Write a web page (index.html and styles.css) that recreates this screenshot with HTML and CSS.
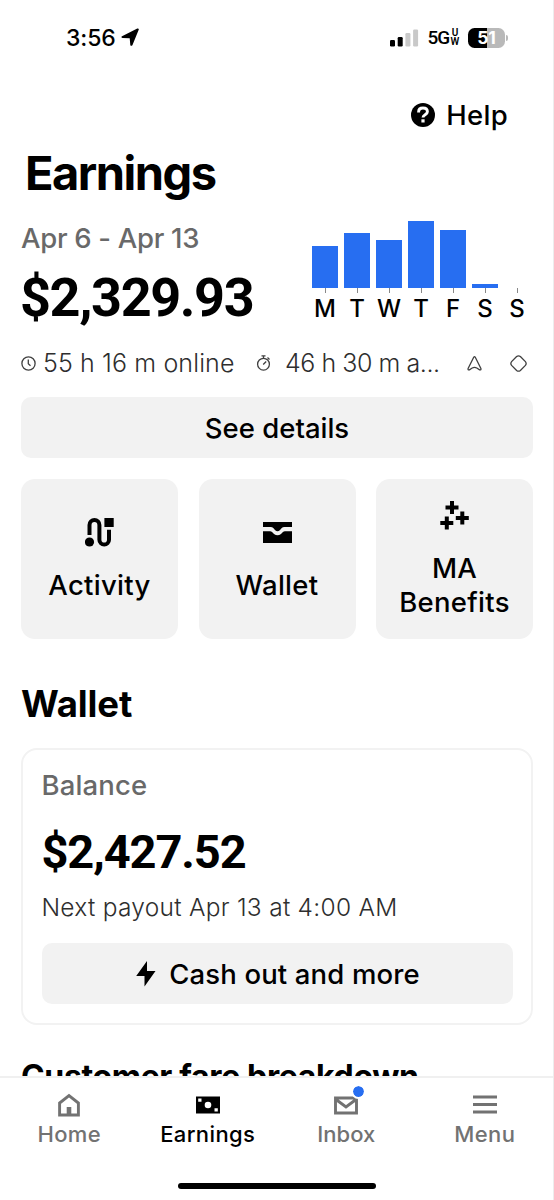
FILE: index.html
```html
<!DOCTYPE html>
<html lang="en">
<head>
<meta charset="utf-8">
<title>Earnings</title>
<link rel="stylesheet" href="styles.css">
</head>
<body>
<div class="screen">
  <header class="status">
    <div class="status-time"><span>3:56</span>
      <svg width="18" height="19" viewBox="0 0 18 19"><path d="M1 8.2 16.3.5c1-.4 1.800.3 1.400 1.300L11.500 17c-.5 1.200-2 1.100-2.200-.1L8.700 10.200 1.500 9.900C.2 9.800-.1 8.700 1 8.200z"/></svg>
    </div>
    <div class="status-right">
      <svg width="29" height="18" viewBox="0 0 29 18"><rect x="0" y="11" width="5" height="6.500" rx="1.200"/><rect x="7.700" y="8" width="5" height="9.500" rx="1.200"/><rect x="15.400" y="4" width="5" height="13.500" rx="1.200" fill="#c9c9c9"/><rect x="23.100" y=".5" width="5" height="17" rx="1.200" fill="#c9c9c9"/></svg>
      <span class="net">5G</span><span class="net-sub"><span>U</span><span>W</span></span>
      <span class="battery">51</span><i class="battery-tip"></i>
    </div>
  </header>

  <div class="help">
    <svg width="24" height="24" viewBox="0 0 24 24"><circle cx="12" cy="12" r="12"/><path d="M7.600 9.400V9c0-2.500 1.800-4 4.400-4s4.400 1.400 4.400 3.800c0 3-4.400 2.900-4.400 5.700" fill="none" stroke="#fff" stroke-width="2.900"/><rect x="10.400" y="16.300" width="3.200" height="3.200" fill="#fff"/></svg>
    <span>Help</span>
  </div>

  <main class="content">
    <h1 class="title">Earnings</h1>

    <section class="summary">
      <div class="week">
        <div class="range">Apr 6 - Apr 13</div>
        <div class="total">$2,329.93</div>
      </div>
      <div class="chart">
        <div class="day"><i class="bar" style="height:42px"></i><i class="tick"></i><span>M</span></div>
        <div class="day"><i class="bar" style="height:55px"></i><i class="tick"></i><span>T</span></div>
        <div class="day"><i class="bar" style="height:48px"></i><i class="tick"></i><span>W</span></div>
        <div class="day"><i class="bar" style="height:67px"></i><i class="tick"></i><span>T</span></div>
        <div class="day"><i class="bar" style="height:58px"></i><i class="tick"></i><span>F</span></div>
        <div class="day"><i class="bar" style="height:4px"></i><i class="tick"></i><span>S</span></div>
        <div class="day"><i class="bar" style="height:0px"></i><i class="tick"></i><span>S</span></div>
      </div>
    </section>

    <section class="stats">
      <svg width="15" height="15" viewBox="0 0 15 15"><circle cx="7.500" cy="7.500" r="6.600"/><path d="M7.300 3.500v4.200l2.200 2"/></svg>
      <span class="online">55 h 16 m online</span>
      <svg width="15" height="16" viewBox="0 0 15 16"><circle cx="7.500" cy="9.200" r="5.900"/><path d="M5.500.8h4M7.500.8v2.500M7.200 9.500l3-3M11.500 2.500l2 2"/></svg>
      <span class="active">46 h 30 m a...</span>
      <svg width="15" height="15" viewBox="0 0 15 15"><path d="M6.700 1.300 1.100 12.500c-.4 1 .3 1.700 1.300 1.300L5.200 12q2.300-1.200 4.600 0l2.800 1.800c1 .4 1.700-.3 1.300-1.300L8.300 1.300q-.8-1.200-1.600 0z"/></svg>
      <svg width="17" height="17" viewBox="0 0 17 17"><path d="M6.600 1.600q1.900-1.500 3.800 0l5 5q1.500 1.900 0 3.800l-5 5q-1.900 1.500-3.800 0l-5-5q-1.500-1.900 0-3.800z"/></svg>
    </section>

    <button class="button details">See details</button>

    <section class="tiles">
      <div class="tile">
        <svg width="29" height="29" viewBox="0 0 29 29"><circle cx="4.500" cy="24" r="4.600"/><rect x="19.400" y="0" width="9.300" height="9"/><path d="M4.500 17V7a4.950 4.950 0 0 1 9.900 0v14.800a4.800 4.800 0 0 0 9.600 0V11.700" fill="none" stroke="#000" stroke-width="4"/></svg>
        <span class="tile-label">Activity</span>
      </div>
      <div class="tile">
        <svg width="29" height="29" viewBox="0 0 29 29"><path d="M0 4h29v5h-7.500q-1.800 0-3 1.300l-1.700 1.900q-2.300 2-4.600 0l-1.700-1.900Q9.300 9 7.500 9H0z"/><path d="M0 13.300h7q1.300 0 2.300 1l1.700 1.700q3.500 2.700 7 0l1.700-1.700q1-1 2.300-1h7V25H0z"/></svg>
        <span class="tile-label">Wallet</span>
      </div>
      <div class="tile">
        <svg width="29" height="29" viewBox="0 0 29 29"><path d="M12 0v13M5.500 6.500h13M22.300 10.500v13M15.800 17h13M6.800 15.500v13M.3 22h13" fill="none" stroke="#000" stroke-width="4"/></svg>
        <span class="tile-label">MA<br>Benefits</span>
      </div>
    </section>

    <h2 class="heading">Wallet</h2>

    <section class="card">
      <div class="balance-label">Balance</div>
      <div class="balance">$2,427.52</div>
      <div class="payout">Next payout Apr 13 at 4:00 AM</div>
      <button class="button cash">
        <svg width="20" height="26" viewBox="0 0 20 26"><path d="M11 0v10h8.500L8.500 25.500V15H.2z"/></svg>
        <span>Cash out and more</span>
      </button>
    </section>

    <h2 class="heading fare">Customer fare breakdown</h2>
  </main>

  <nav class="tabs">
    <div class="tab">
      <svg width="24" height="24" viewBox="0 0 24 24"><path d="M2.600 22V10L12 2.500 21.400 10v12z" fill="none" stroke="#727272" stroke-width="2.900"/><path d="M9.700 14h4.600v8H9.700z" fill="#727272"/></svg>
      <span class="home-label">Home</span>
    </div>
    <div class="tab selected">
      <svg width="24" height="24" viewBox="0 0 24 24"><path d="M0 3.500h24v17H0z"/><path d="M2.200 5.500h3.300v3.300H2.200zM18.500 15.300h3.300v3.300h-3.300z" fill="#fff"/><circle cx="12" cy="12" r="3.300" fill="#fff"/></svg>
      <span class="earn-label">Earnings</span>
    </div>
    <div class="tab">
      <div class="inbox">
        <svg width="24" height="24" viewBox="0 0 24 24"><path d="M1.500 5h21v15h-21zM2 6.500l10 7.500 10-7.500" fill="none" stroke="#727272" stroke-width="2.900"/></svg>
        <i class="dot"></i>
      </div>
      <span>Inbox</span>
    </div>
    <div class="tab">
      <svg width="24" height="24" viewBox="0 0 24 24"><path d="M0 4h24M0 11.500h24M0 19h24" stroke="#727272" stroke-width="3"/></svg>
      <span class="menu-label">Menu</span>
    </div>
  </nav>
  <footer class="indicator"><i></i></footer>
</div>
</body>
</html>
```
FILE: styles.css
```css
* { box-sizing: border-box; }
body { margin: 0; background: #fff; color: #000; font-family: Inter, "Liberation Sans", sans-serif; font-weight: 500; }
svg { display: block; flex: none; }
h1, h2 { margin: 0; }
.screen { width: 554px; height: 1200px; display: flex; flex-direction: column; overflow: hidden; border-right: 1px solid #ededed; }

.status { flex: none; height: 75px; padding: 0 45px 0 66px; display: flex; align-items: center; justify-content: space-between; }
.status-time { display: flex; align-items: center; gap: 5px; font-size: 23px; font-weight: 500; letter-spacing: -0.1px; }
.status-right { display: flex; align-items: center; }
.net { margin-left: 8px; font: 500 19px/20px Roboto, sans-serif; letter-spacing: -1.1px; }
.net-sub { display: flex; flex-direction: column; align-items: center; width: 10px; margin-left: 1px; font: 600 10px/8.500px Roboto, sans-serif; }
.battery { width: 37px; height: 20px; margin-left: 8px; border-radius: 6.5px; background: linear-gradient(90deg, #000 51%, #b9b9b9 51%); color: #fff; font-size: 17.5px; font-weight: 700; line-height: 20px; text-align: center; }
.battery-tip { width: 2px; height: 6px; margin-left: 1px; border-radius: 0 2px 2px 0; background: #b9b9b9; }

.help { flex: none; height: 80px; margin-bottom: -10px; padding-right: 45px; display: flex; align-items: center; justify-content: flex-end; gap: 11px; font-size: 27.5px; letter-spacing: 0.3px; }

.content { flex: 1; min-height: 0; overflow: hidden; padding: 0 20px 0 21px; }
.title { padding-left: 4px; font-size: 47px; line-height: 56px; font-weight: 700; letter-spacing: -1.5px; white-space: nowrap; }
.summary { display: flex; justify-content: space-between; height: 134px; padding-top: 12px; }
.range { height: 50px; font-size: 27.5px; line-height: 50px; letter-spacing: -0.3px; color: #696969; }
.total { font: 700 54px/70px Roboto, sans-serif; letter-spacing: -1.4px; margin-left: -1px; white-space: nowrap; }
.chart { display: flex; align-items: flex-end; width: 224px; height: 112px; }
.day { width: 32px; display: flex; flex-direction: column; align-items: center; }
.bar { width: 26px; background: #276ef1; }
.tick { width: 1px; height: 5px; background: #888; }
.day span { height: 32px; font-size: 24px; line-height: 32px; }

.stats { display: grid; grid-template-columns: 22px 213px 29px 182px 43px 17px; align-items: center; height: 48px; margin-bottom: 10px; margin-top: 4px; font-size: 25px; font-weight: 300; color: #2e2e2e; white-space: nowrap; }
.stats svg { fill: none; stroke: #404040; stroke-width: 1.3; }
.online { letter-spacing: 0.12px; }
.active { letter-spacing: -0.45px; }

.button { width: 100%; height: 61px; padding: 0; border: 0; border-radius: 10px; background: #f2f2f2; color: #000; font: 500 27.5px Inter, sans-serif; display: flex; align-items: center; justify-content: center; }
.details { letter-spacing: 0; }

.tiles { display: grid; grid-template-columns: repeat(3, 1fr); gap: 20.5px; margin-top: 21px; }
.tile { height: 160px; border-radius: 14px; background: #f2f2f2; display: flex; flex-direction: column; align-items: center; justify-content: center; gap: 22px; padding-top: 2px; }
.tile-label { font-size: 27.5px; line-height: 33.5px; letter-spacing: 0.3px; text-align: center; }

.heading { font-size: 36.5px; line-height: 44px; font-weight: 700; letter-spacing: -0.1px; margin-top: 43px; }
.card { height: 277px; margin-top: 22px; padding: 15px 18.5px 0; border: 2px solid #f2f2f2; border-radius: 16px; }
.balance-label { font-size: 27.5px; line-height: 40px; letter-spacing: 0.15px; color: #696969; }
.balance { height: 90px; font: 700 47px/94px Roboto, sans-serif; letter-spacing: -1.1px; }
.payout { font-size: 24.5px; line-height: 24px; font-weight: 300; letter-spacing: 0.27px; color: #2e2e2e; white-space: nowrap; }
.cash { margin-top: 24px; padding-left: 2px; gap: 13px; letter-spacing: 0.15px; }
.fare { font-size: 32px; letter-spacing: -0.35px; margin-top: 30px; white-space: nowrap; }

.tabs { flex: none; height: 104px; border-top: 2px solid #f0f0f0; background: #fff; display: grid; grid-template-columns: repeat(4, 138.5px); }
.tab { display: flex; flex-direction: column; align-items: center; padding-top: 15px; gap: 3px; font-size: 22px; line-height: 28px; color: #727272; }
.selected { color: #000; }
.inbox { position: relative; }
.dot { position: absolute; left: 17px; top: -9px; width: 15px; height: 15px; border: 2px solid #fff; border-radius: 50%; background: #276ef1; background-clip: padding-box; }
.earn-label { letter-spacing: 0.4px; }
.home-label { letter-spacing: 0.3px; }
.menu-label { letter-spacing: 0.4px; }
.indicator { flex: none; height: 20px; padding-top: 3px; display: flex; justify-content: center; }
.indicator i { width: 198px; height: 6px; border-radius: 3px; background: #000; }
```
